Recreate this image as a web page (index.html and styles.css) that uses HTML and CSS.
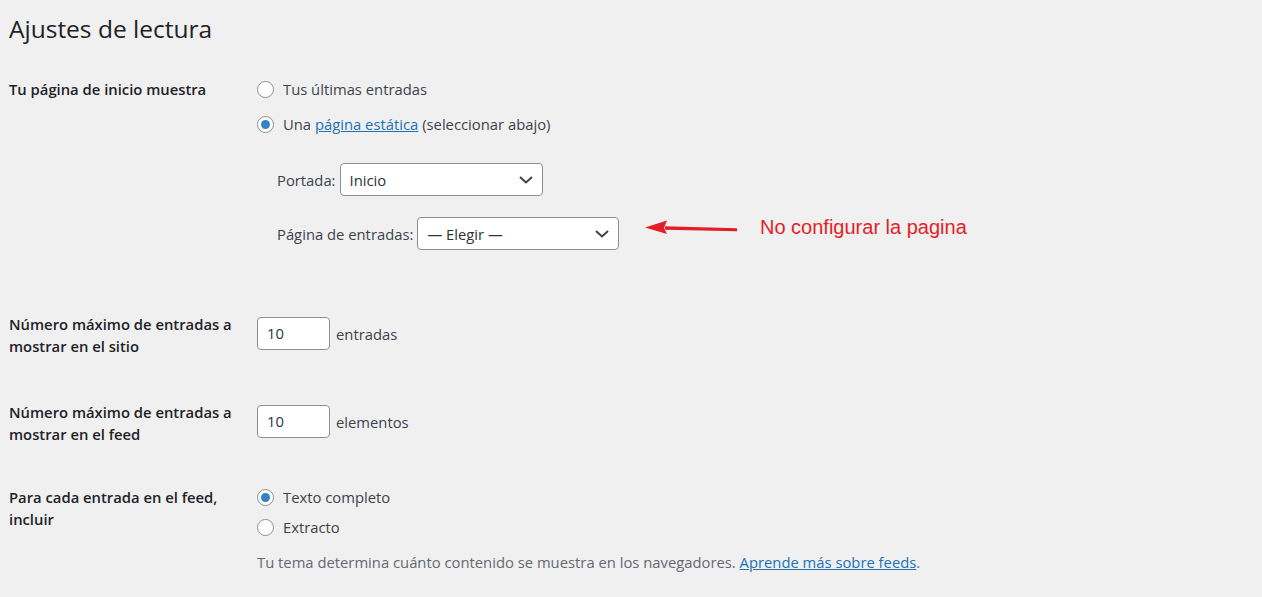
FILE: index.html
```html
<!DOCTYPE html>
<html lang="es">
<head>
<meta charset="utf-8">
<title>Ajustes de lectura</title>
<link rel="stylesheet" href="styles.css">
</head>
<body>
<div class="wrap">
  <h1 class="title">Ajustes de lectura</h1>

  <div class="row row-front">
    <div class="th">Tu página de inicio muestra</div>
    <div class="td">
      <label class="opt"><span class="radio"></span>Tus últimas entradas</label>
      <label class="opt opt-2"><span class="radio checked"></span>Una&nbsp;<a class="link" href="#">página estática</a>&nbsp;(seleccionar abajo)</label>
      <div class="sub sub-1">
        <span class="sub-label">Portada:</span>
        <div class="select select-front"><span>Inicio</span>
          <svg class="chev" width="14" height="8" viewBox="0 0 14 8"><path d="M1 1l6 5.5L13 1" fill="none" stroke="#3c434a" stroke-width="2"/></svg>
        </div>
      </div>
      <div class="sub sub-2">
        <span class="sub-label">Página de entradas:</span>
        <div class="select select-posts"><span>— Elegir —</span>
          <svg class="chev" width="14" height="8" viewBox="0 0 14 8"><path d="M1 1l6 5.5L13 1" fill="none" stroke="#3c434a" stroke-width="2"/></svg>
        </div>
      </div>
    </div>
  </div>

  <div class="row row-posts">
    <div class="th">Número máximo de entradas a mostrar en el sitio</div>
    <div class="td td-input">
      <div class="input">10</div><span class="unit">entradas</span>
    </div>
  </div>

  <div class="row row-feed">
    <div class="th">Número máximo de entradas a mostrar en el feed</div>
    <div class="td td-input">
      <div class="input">10</div><span class="unit">elementos</span>
    </div>
  </div>

  <div class="row row-include">
    <div class="th">Para cada entrada en el feed, incluir</div>
    <div class="td">
      <label class="opt"><span class="radio checked"></span>Texto completo</label>
      <label class="opt opt-b"><span class="radio"></span>Extracto</label>
      <p class="desc">Tu tema determina cuánto contenido se muestra en los navegadores. <a class="link" href="#">Aprende más sobre feeds</a>.</p>
    </div>
  </div>

  <div class="note">
    <svg class="note-arrow" width="96" height="16" viewBox="0 0 96 16"><path d="M20 6.2 L92 8.2 L92 11.2 L20 9.8 Z" fill="#e41e26"/><path d="M0 7.5 L22 0.5 L19 8 L22 14 Z" fill="#e41e26"/></svg>
    <span class="note-text">No configurar la pagina</span>
  </div>
</div>
</body>
</html>
```
FILE: styles.css
```css
html, body {
  margin: 0;
  padding: 0;
}
body {
  background: #f0f0f1;
  color: #3c434a;
  font-family: "Open Sans", "Noto Sans", "DejaVu Sans", sans-serif;
  font-size: 14.8px;
  width: 1262px;
  height: 597px;
  overflow: hidden;
}
.wrap {
  position: relative;
  padding-left: 9px;
}
.title {
  margin: 0;
  padding-top: 13px;
  font-size: 24.5px;
  font-weight: 400;
  line-height: 32px;
  color: #1d2327;
}
.row {
  display: grid;
  grid-template-columns: 248px 1fr;
  align-items: start;
}
.th {
  color: #1d2327;
  font-weight: 600;
  line-height: 22px;
  width: 235px;
}
.td {
  display: flex;
  flex-direction: column;
  align-items: flex-start;
}
.row-front { margin-top: 33px; }
.row-posts { margin-top: 63px; }
.row-feed { margin-top: 44px; }
.row-include { margin-top: 41px; }

.opt {
  display: flex;
  align-items: center;
  height: 22px;
  line-height: 22px;
  white-space: nowrap;
}
.opt-2 { margin-top: 13px; }
.opt-b { margin-top: 8px; }
.radio {
  box-sizing: border-box;
  width: 17px;
  height: 17px;
  border: 1px solid #8c8f94;
  border-radius: 50%;
  background: #fff;
  margin-right: 9px;
  display: flex;
  align-items: center;
  justify-content: center;
  flex: none;
}
.radio.checked::after {
  content: "";
  width: 9px;
  height: 9px;
  border-radius: 50%;
  background: #3582c4;
}
.link {
  color: #2271b1;
  text-decoration: underline;
}
.sub {
  display: flex;
  align-items: center;
  margin-left: 20px;
}
.sub-1 { margin-top: 28px; }
.sub-2 { margin-top: 21px; }
.sub-label { margin-right: 4px; }
.select {
  box-sizing: border-box;
  height: 33px;
  border: 1px solid #8c8f94;
  border-radius: 4px;
  background: #fff;
  display: flex;
  align-items: center;
  justify-content: space-between;
  padding: 0 9px 0 9px;
  color: #2c3338;
}
.select-front { width: 203px; }
.select-posts { width: 202px; }
.chev { display: block; }
.td-input {
  flex-direction: row;
  align-items: center;
  padding-top: 4px;
}
.input {
  box-sizing: border-box;
  width: 73px;
  height: 33px;
  border: 1px solid #8c8f94;
  border-radius: 4px;
  background: #fff;
  padding-left: 9px;
  line-height: 31px;
  color: #2c3338;
}
.unit { margin-left: 6px; }
.desc {
  margin: 13px 0 0;
  line-height: 22px;
  color: #646970;
  white-space: nowrap;
}
.note {
  position: absolute;
  left: 645px;
  top: 216px;
  display: flex;
  align-items: center;
}
.note-arrow { display: block; }
.note-text {
  margin-left: 19px;
  font-family: "Liberation Sans", Arial, sans-serif;
  font-size: 20px;
  color: #e41e26;
}
```
